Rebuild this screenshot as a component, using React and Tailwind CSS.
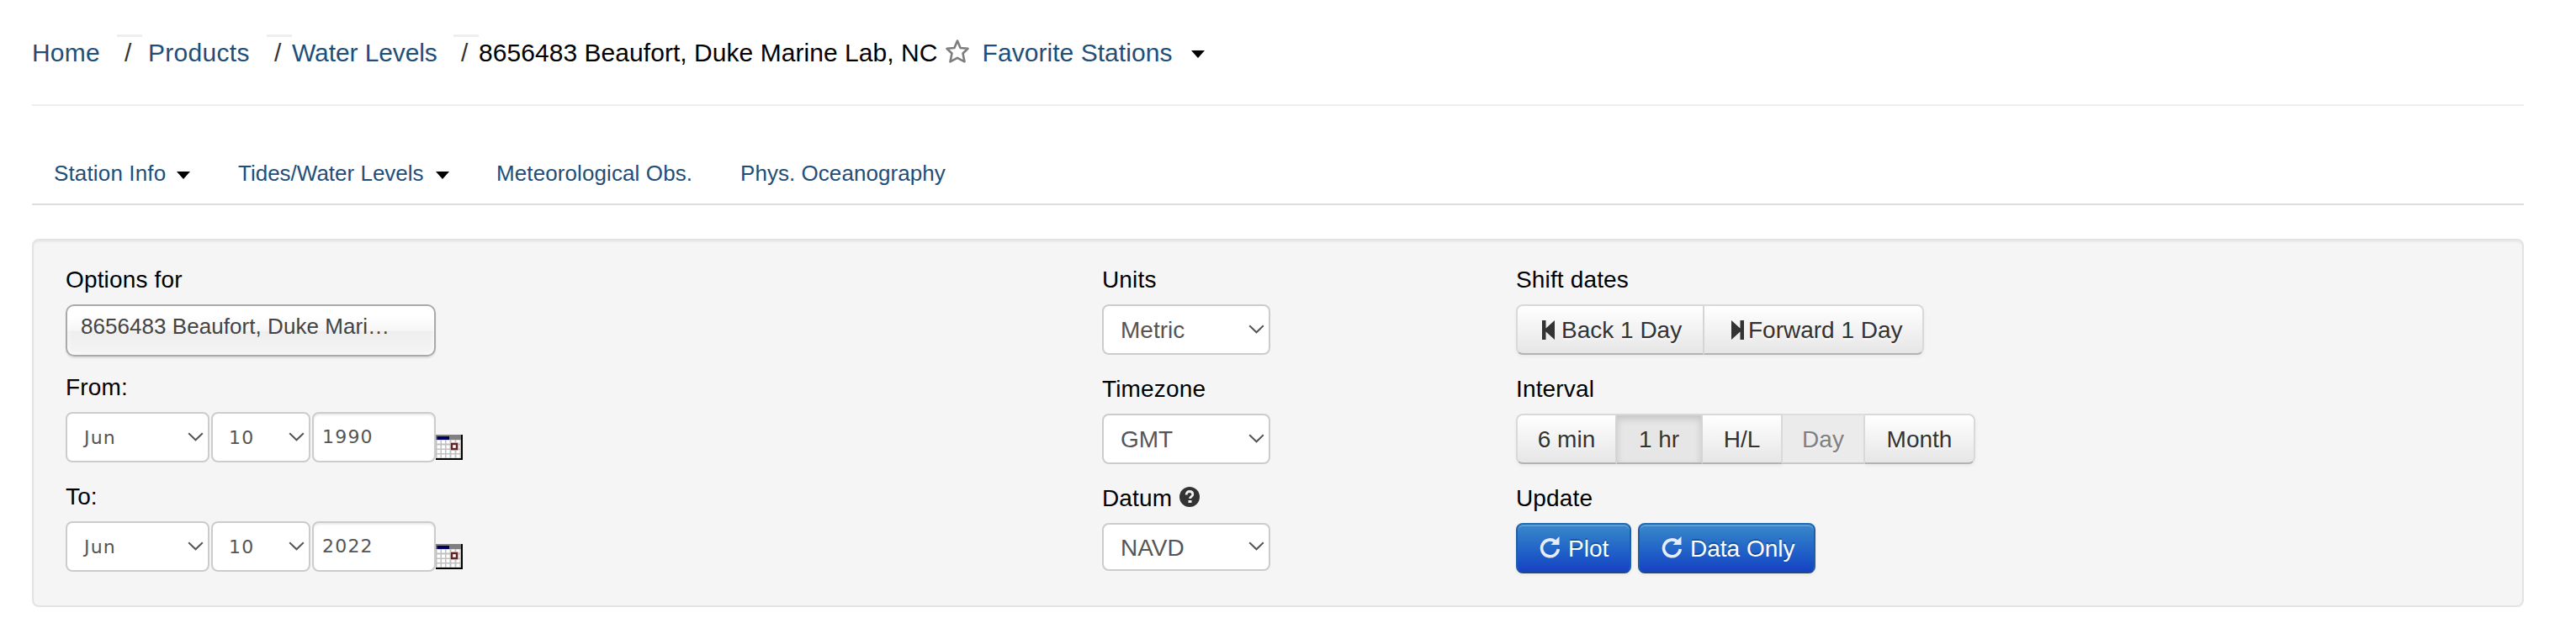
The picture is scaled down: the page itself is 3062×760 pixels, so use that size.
const FONT = "font-['Liberation_Sans',Arial,sans-serif]";

function Caret({ className = "" }) {
  return (
    <svg className={`h-[9px] w-4 shrink-0 ${className}`} viewBox="0 0 16 9">
      <path d="M0 0h16L8 9z" fill="#000" />
    </svg>
  );
}

function Chevron({ className = "" }) {
  return (
    <svg className={`h-[11px] w-[19px] shrink-0 ${className}`} viewBox="0 0 19 11" fill="none">
      <path d="M1.2 1.2 9.5 9.3 17.8 1.2" stroke="#555" strokeWidth="2" />
    </svg>
  );
}

function Star() {
  return (
    <svg className="ml-2 h-[30px] w-[30px] shrink-0 -translate-y-0.5" viewBox="0 0 30 30">
      <path
        d="M15 2.500 18.600 11 27.500 11.800 21.500 17.500 23.500 27.300 15 22.800 6.500 27.300 8.500 17.500 2.500 11.800 11.400 11z"
        fill="#fff"
        stroke="#7d7d7d"
        strokeWidth="2.600"
        strokeLinejoin="round"
      />
    </svg>
  );
}

function Calendar() {
  return (
    <svg className="mt-[27px] h-[30px] w-8 shrink-0" viewBox="0 0 32 30">
      <rect width="32" height="30" fill="#000" />
      <rect width="30" height="28" fill="#808080" />
      <rect x="1.500" y="2" width="14.500" height="4" fill="#000060" />
      <rect y="6" width="30" height="22" fill="#c0c0c0" />
      {[6.5, 12.5, 18, 23.5].map((y) =>
        [1.5, 7, 12.5, 18.5, 24.5].map((x) => (
          <rect key={`${x}-${y}`} x={x} y={y} width="4" height="4" fill="#fff" />
        ))
      )}
      <rect x="17" y="9" width="10" height="10" fill="#e8c8c8" />
      <rect x="19" y="11" width="6" height="6" fill="#fff" stroke="#5e2626" strokeWidth="2.400" />
    </svg>
  );
}

function Label({ children, className = "" }) {
  return (
    <div className={`flex h-10 items-center text-[28px] leading-10 tracking-[0.15px] text-black ${className}`}>
      <span className="translate-y-px">{children}</span>
    </div>
  );
}

function Select({ children, className }) {
  return (
    <div className={`flex items-center justify-between rounded-lg border-2 border-[#ccc] bg-white text-[#555] ${className}`}>
      <span className="translate-y-px">{children}</span>
      <Chevron className="mr-[5px] -translate-y-px" />
    </div>
  );
}

const DATE_FONT = "font-['DejaVu_Sans',Verdana,sans-serif] text-[22px] tracking-[1.2px] leading-[56px]";

function DateRow({ year }) {
  return (
    <div className={`mt-2.5 flex h-[60px] items-start ${DATE_FONT}`}>
      <Select className="h-[60px] w-[171px] pl-5">Jun</Select>
      <Select className="ml-0.5 h-[60px] w-[118px] pl-[19px]">10</Select>
      <div className="ml-0.5 h-[60px] w-[147px] rounded-lg border-2 border-[#ccc] bg-white pl-2.5 leading-[56px] text-[#555] shadow-[inset_0_2px_2px_rgba(0,0,0,0.075)]">
        {year}
      </div>
      <Calendar />
    </div>
  );
}

const BTN =
  "flex h-[60px] items-center border-y-2 border-r-2 border-[#d9d9d9] border-b-[#b3b3b3] text-[28px] leading-[56px] text-[#333] [text-shadow:0_2px_2px_rgba(255,255,255,0.75)]";
const BTN_UP =
  "bg-linear-to-b from-white to-[#e6e6e6] shadow-[inset_0_2px_0_rgba(255,255,255,0.2),0_2px_4px_rgba(0,0,0,0.05)]";

const PRIMARY =
  "flex h-[60px] items-center rounded-lg border-2 border-[#1f5ea8] border-t-[#2268b2] border-b-[#1b4a92] bg-linear-to-b from-[#3a87c8] to-[#1840c4] pl-[26px] text-[28px] leading-[56px] text-white shadow-[inset_0_2px_0_rgba(255,255,255,0.2),0_2px_4px_rgba(0,0,0,0.05)] [text-shadow:0_-2px_0_rgba(0,0,0,0.25)]";

function Refresh() {
  return (
    <svg className="h-[26px] w-[25px] shrink-0 -translate-y-px" viewBox="0 0 25 26" fill="none">
      <path d="M18.500 6A9.900 9.900 0 1 0 22.300 15" stroke="#e6edf8" strokeWidth="3.600" />
      <path d="M23.500 0v10h-10z" fill="#e6edf8" />
    </svg>
  );
}

function StepIcon({ flip, className }) {
  return (
    <svg className={`h-[23px] w-[15px] shrink-0 ${flip ? "-scale-x-100" : ""} ${className}`} viewBox="0 0 15 23">
      <path d="M0 0h4.500v9.500L15 0v23L4.500 13.500V23H0z" fill="#333" />
    </svg>
  );
}

const SLASH = "w-[30px] border-t-[3px] border-[#eee] pl-[9px] leading-[37px] text-[#333]";

export default function App() {
  return (
    <div className={`h-[760px] w-[3062px] bg-white pl-[38px] ${FONT}`}>
      <header className="flex h-[126px] w-[2962px] items-start border-b-2 border-[#eee] pt-[41px] text-[30px] leading-[43px] whitespace-nowrap text-[#1f4e79]">
        <a className="w-[101px] tracking-[0.2px]">Home</a>
        <span className={SLASH}>/</span>
        <a className="ml-[7px] w-[141px] tracking-[0.3px]">Products</a>
        <span className={SLASH}>/</span>
        <a className="w-[192px] tracking-[-0.1px]">Water Levels</a>
        <span className={SLASH}>/</span>
        <div className="flex h-[43px] items-center">
          <span className="tracking-[0.05px] text-black">8656483 Beaufort, Duke Marine Lab, NC</span>
          <Star />
          <a className="ml-[15px] tracking-[0.05px]">Favorite Stations</a>
          <Caret className="ml-[23px] translate-y-[2px]" />
        </div>
      </header>

      <nav className="flex h-[118px] w-[2962px] items-start border-b-2 border-[#ddd] pt-[60px] pl-[26px] text-[26px] leading-10 whitespace-nowrap text-[#1f4e79]">
        <div className="flex w-[219px] items-center tracking-[0.15px]">
          Station Info
          <Caret className="ml-[13px] translate-y-[2px]" />
        </div>
        <div className="flex w-[307px] items-center">
          Tides/Water Levels
          <Caret className="ml-[14px] translate-y-[2px]" />
        </div>
        <div className="w-[290px] tracking-[0.1px]">Meteorological Obs.</div>
        <div className="tracking-[0.05px]">Phys. Oceanography</div>
      </nav>

      <main className="mt-10 flex h-[438px] w-[2962px] items-start rounded-lg border-2 border-[#e3e3e3] bg-[#f5f5f5] pt-[26px] pl-[38px] whitespace-nowrap shadow-[inset_0_2px_2px_rgba(0,0,0,0.05)]">
        <section className="w-[1232px]">
          <Label>Options for</Label>
          <div className="mt-2.5 h-[62px] w-[440px] rounded-[10px] border-2 border-[#aaa] bg-[linear-gradient(#fff_20%,#f6f6f6_50%,#eee_52%,#f4f4f4_100%)] bg-clip-padding pl-4 text-[26px] leading-[48px] tracking-[0.05px] text-[#444] shadow-[inset_0_0_6px_#fff,0_2px_2px_rgba(0,0,0,0.1)]">
            8656483 Beaufort, Duke Mari…
          </div>
          <Label className="mt-4">From:</Label>
          <DateRow year="1990" />
          <Label className="mt-5">To:</Label>
          <DateRow year="2022" />
        </section>

        <section className="w-[492px]">
          <Label>Units</Label>
          <Select className="mt-2.5 h-[60px] w-[200px] pl-5 text-[28px]">Metric</Select>
          <Label className="mt-5">Timezone</Label>
          <Select className="mt-2.5 h-[60px] w-[200px] pl-5 text-[28px]">GMT</Select>
          <Label className="mt-5">
            <span className="flex items-center">
              Datum
              <svg className="ml-[9px] h-6 w-6 -translate-y-0.5" viewBox="0 0 24 24" fill="none">
                <circle cx="12" cy="12" r="12" fill="#333" />
                <path d="M8.200 9.400C8.200 6.900 9.800 5.500 12 5.500s3.800 1.400 3.800 3.400c0 2.500-3.300 2.800-3.300 5.100" stroke="#f0f0f0" strokeWidth="2.800" />
                <path d="M10.500 16h4v3h-4z" fill="#f0f0f0" />
              </svg>
            </span>
          </Label>
          <Select className="mt-2.5 h-[57px] w-[200px] pl-5 text-[28px]">NAVD</Select>
        </section>

        <section>
          <Label>Shift dates</Label>
          <div className="mt-2.5 flex">
            <div className={`${BTN} ${BTN_UP} w-[224px] rounded-l-lg border-l-2 pl-[29px]`}>
              <StepIcon className="mr-2" />
              <span className="translate-y-px">Back 1 Day</span>
            </div>
            <div className={`${BTN} ${BTN_UP} w-[261px] rounded-r-lg pl-8`}>
              <StepIcon flip className="mr-[5px]" />
              <span className="translate-y-px">Forward 1 Day</span>
            </div>
          </div>
          <Label className="mt-5">Interval</Label>
          <div className="mt-2.5 flex">
            <div className={`${BTN} ${BTN_UP} w-[120px] justify-center rounded-l-lg border-l-2`}>
              <span className="translate-y-px">6 min</span>
            </div>
            <div className={`${BTN} w-[102px] justify-center border-[#ccc] bg-[#e6e6e6] shadow-[inset_0_4px_8px_rgba(0,0,0,0.15),0_2px_4px_rgba(0,0,0,0.05)]`}>
              <span className="translate-y-px">1 hr</span>
            </div>
            <div className={`${BTN} ${BTN_UP} w-[95px] justify-center`}>
              <span className="translate-y-px">H/L</span>
            </div>
            <div className="flex h-[60px] w-[98px] items-center justify-center border-y-2 border-r-2 border-[#ddd] border-b-[#c8c8c8] bg-[#ebebeb] text-[28px] leading-[56px] text-[#808080] [text-shadow:0_2px_2px_rgba(255,255,255,0.5)]">
              <span className="translate-y-px">Day</span>
            </div>
            <div className={`${BTN} ${BTN_UP} w-[131px] justify-center rounded-r-lg`}>
              <span className="translate-y-px">Month</span>
            </div>
          </div>
          <Label className="mt-5">Update</Label>
          <div className="mt-2.5 flex gap-2">
            <div className={`${PRIMARY} w-[137px]`}>
              <Refresh />
              <span className="ml-[9px] translate-y-px">Plot</span>
            </div>
            <div className={`${PRIMARY} w-[211px]`}>
              <Refresh />
              <span className="ml-[9px] translate-y-px">Data Only</span>
            </div>
          </div>
        </section>
      </main>
    </div>
  );
}
